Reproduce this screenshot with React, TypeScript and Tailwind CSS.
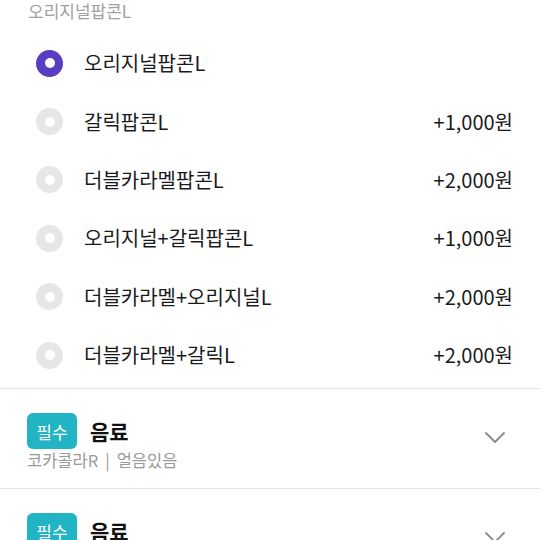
import { useState } from 'react'

const options = [
  { name: '오리지널팝콘L', price: '' },
  { name: '갈릭팝콘L', price: '+1,000원' },
  { name: '더블카라멜팝콘L', price: '+2,000원' },
  { name: '오리지널+갈릭팝콘L', price: '+1,000원' },
  { name: '더블카라멜+오리지널L', price: '+2,000원' },
  { name: '더블카라멜+갈릭L', price: '+2,000원' },
]

function Radio({ checked }: { checked: boolean }) {
  return (
    <span
      className={
        checked
          ? 'flex h-[27px] w-[27px] items-center justify-center rounded-full bg-[#5a3dc3]'
          : 'flex h-[27px] w-[27px] items-center justify-center rounded-full bg-[#e6e6e6]'
      }
    >
      <span className="h-[10px] w-[10px] rounded-full bg-white" />
    </span>
  )
}

function Chevron() {
  return (
    <svg width="22" height="14" viewBox="0 0 22 14" fill="none">
      <path d="M2 2l9 9 9-9" stroke="#8a8a8a" strokeWidth="1.8" strokeLinecap="round" strokeLinejoin="round" />
    </svg>
  )
}

function Section({ title, sub }: { title: string; sub?: string[] }) {
  return (
    <div className="border-t border-[#e4e4e4] pt-[24px] pb-[17px] pl-[27px] pr-[34px]">
      <div className="flex items-center">
        <span className="flex h-[36px] w-[50px] items-center justify-center rounded-[6px] bg-[#20b4c4] text-[17px] text-white">
          필수
        </span>
        <span className="ml-[13px] text-[21px] font-bold text-[#111]">{title}</span>
        <span className="ml-auto mt-[14px]">
          <Chevron />
        </span>
      </div>
      {sub && (
        <div className="text-[16.5px] leading-[22px] text-[#9a9a9a]">
          {sub[0]}
          <span className="mx-[7px]">|</span>
          {sub[1]}
        </div>
      )}
    </div>
  )
}

export default function App() {
  const [selected, setSelected] = useState(0)

  return (
    <div className="h-[540px] w-[540px] overflow-hidden bg-white font-['Noto_Sans_CJK_KR','Noto_Sans',sans-serif]">
      <div className="h-[34px] pl-[28px]">
        <div className="text-[17px] leading-[22px] text-[#a0a0a0]">오리지널팝콘L</div>
      </div>
      <div className="pb-[4px]">
        {options.map((o, i) => (
          <div
            key={o.name}
            onClick={() => setSelected(i)}
            className="flex h-[58.4px] cursor-pointer items-center pl-[36px] pr-[27px]"
          >
            <Radio checked={selected === i} />
            <span className="ml-[21px] text-[20px] text-[#1a1a1a]">{o.name}</span>
            <span className="ml-auto text-[20px] text-[#1a1a1a]">{o.price}</span>
          </div>
        ))}
      </div>
      <Section title="음료" sub={['코카콜라R', '얼음있음']} />
      <Section title="음료" />
    </div>
  )
}
